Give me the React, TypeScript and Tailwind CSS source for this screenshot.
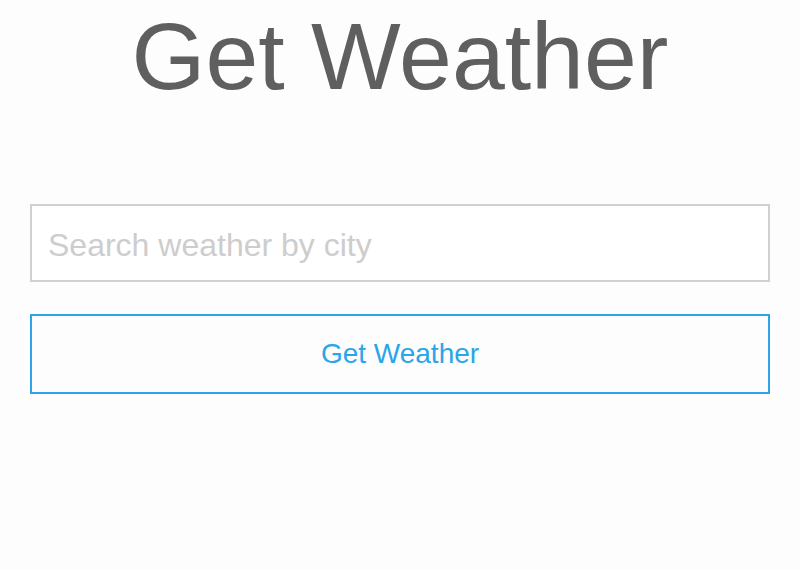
export default function App() {
  return (
    <div className="min-h-[570px] w-full bg-[#fdfdfd] px-[30px] font-['Liberation_Sans',Arial,sans-serif]">
      <h1 className="pt-[9px] text-center text-[95px] leading-none text-[#5f5f5f]">Get Weather</h1>
      <form className="mt-[100px] flex flex-col gap-[32px]" onSubmit={(e) => e.preventDefault()}>
        <input
          type="text"
          placeholder="Search weather by city"
          className="h-[78px] w-full border-2 border-[#d0d0d0] bg-white px-[16px] pt-[4px] text-[32px] text-[#5f5f5f] outline-none placeholder:text-[#cdcdcd]"
        />
        <button
          type="submit"
          className="h-[80px] w-full border-2 border-[#2aa5e8] bg-transparent text-[28px] text-[#2aa5e8]"
        >
          Get Weather
        </button>
      </form>
    </div>
  );
}
